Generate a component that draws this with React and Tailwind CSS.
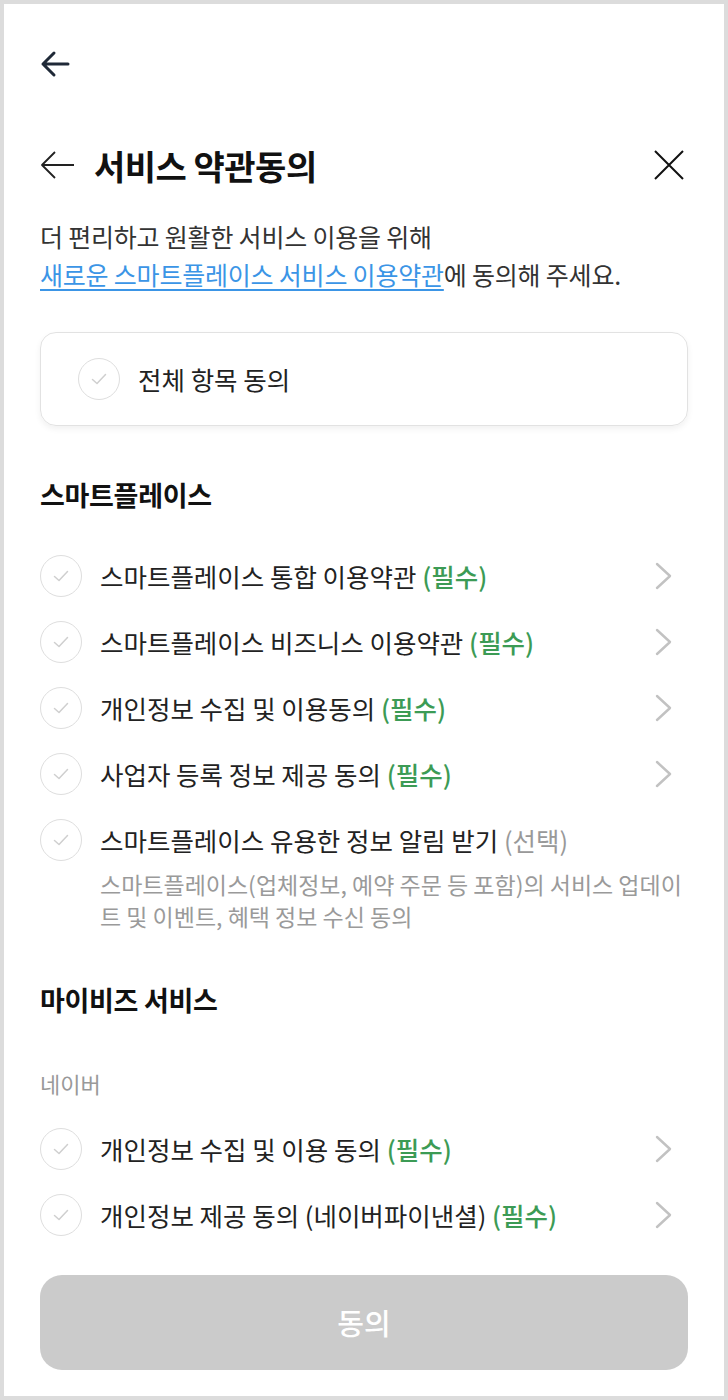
const font = { fontFamily: '"Noto Sans CJK KR", "Noto Sans", sans-serif' };

const CheckCircle = () => (
  <span className="flex h-[42px] w-[42px] shrink-0 items-center justify-center rounded-full border-[1.5px] border-[#dedede] bg-white">
    <svg width="20" height="20" viewBox="0 0 20 20" fill="none">
      <path d="M3.5 10.5 L8 14.5 L16.5 5.5" stroke="#cfcfcf" strokeWidth="1.5" strokeLinecap="round" strokeLinejoin="round" />
    </svg>
  </span>
);

const Chevron = () => (
  <svg width="20" height="30" viewBox="0 0 20 30" fill="none" className="shrink-0">
    <path d="M3 3 L16 15 L3 27" stroke="#c2c2c2" strokeWidth="2.4" strokeLinecap="round" strokeLinejoin="round" />
  </svg>
);

const TermRow = ({ label, tag = '필수', optional, arrow = true }) => (
  <div className="flex h-[66px] items-center gap-[18px]">
    <CheckCircle />
    <span className="flex-1 text-[25.5px] text-[#222]">
      {label}{' '}
      <span className={optional ? 'text-[#999]' : 'font-medium text-[#3c9b55]'}>({tag})</span>
    </span>
    {arrow && <span className="pr-[14px]"><Chevron /></span>}
  </div>
);

export default function App() {
  return (
    <div className="min-h-[1400px] bg-[#dcdcdc] p-1" style={font}>
      <div className="flex min-h-[1392px] flex-col bg-white px-9">
        {/* top back */}
        <div className="flex h-[120px] items-center">
          <svg width="30" height="28" viewBox="0 0 30 28" fill="none">
            <path d="M28 14 H3 M14 3 L3 14 L14 25" stroke="#1f2937" strokeWidth="3" strokeLinecap="round" strokeLinejoin="round" />
          </svg>
        </div>

        {/* header */}
        <div className="flex h-[82px] items-center">
          <svg width="36" height="30" viewBox="0 0 36 30" fill="none" className="mr-[18px]">
            <path d="M34 15 H2 M15 2 L2 15 L15 28" stroke="#222" strokeWidth="1.8" strokeLinejoin="round" />
          </svg>
          <h1 className="flex-1 text-[34px] font-bold tracking-[-0.5px] text-[#111]">서비스 약관동의</h1>
          <svg width="32" height="32" viewBox="0 0 32 32" fill="none" className="mr-[3px]">
            <path d="M2 2 L30 30 M30 2 L2 30" stroke="#111" strokeWidth="2" />
          </svg>
        </div>

        <p className="mt-[11px] text-[25px] leading-[38px] tracking-[-0.2px] text-[#333]">
          더 편리하고 원활한 서비스 이용을 위해
          <br />
          <span className="text-[#3b95e6] underline underline-offset-4">새로운 스마트플레이스 서비스 이용약관</span>에 동의해 주세요.
        </p>

        <div className="mt-[39px] flex h-[94px] items-center gap-[18px] rounded-[16px] border border-[#e2e2e2] px-[37px] shadow-[0_3px_6px_rgba(0,0,0,0.06)]">
          <CheckCircle />
          <span className="text-[25.5px] text-[#222]">전체 항목 동의</span>
        </div>

        <h2 className="mt-[49px] text-[27px] leading-[40px] font-bold tracking-[-0.3px] text-[#111]">스마트플레이스</h2>

        <div className="mt-[28px] flex flex-col">
          <TermRow label="스마트플레이스 통합 이용약관" />
          <TermRow label="스마트플레이스 비즈니스 이용약관" />
          <TermRow label="개인정보 수집 및 이용동의" />
          <TermRow label="사업자 등록 정보 제공 동의" />
          <TermRow label="스마트플레이스 유용한 정보 알림 받기" tag="선택" optional arrow={false} />
          <p className="-mt-[5px] pl-[60px] pr-1 text-[23px] leading-[32px] text-[#9a9a9a]">
            스마트플레이스(업체정보, 예약 주문 등 포함)의 서비스 업데이트 및 이벤트, 혜택 정보 수신 동의
          </p>
        </div>

        <h2 className="mt-[48px] text-[27px] leading-[40px] font-bold tracking-[-0.3px] text-[#111]">마이비즈 서비스</h2>

        <p className="mt-[46px] text-[22px] leading-[34px] text-[#999]">네이버</p>

        <div className="mt-[16px] flex flex-col">
          <TermRow label="개인정보 수집 및 이용 동의" />
          <TermRow label="개인정보 제공 동의 (네이버파이낸셜)" />
        </div>

        <button className="mt-[27px] flex h-[95px] items-center justify-center rounded-[22px] bg-[#cbcbcb] text-[29px] font-medium text-white">
          동의
        </button>
      </div>
    </div>
  );
}
